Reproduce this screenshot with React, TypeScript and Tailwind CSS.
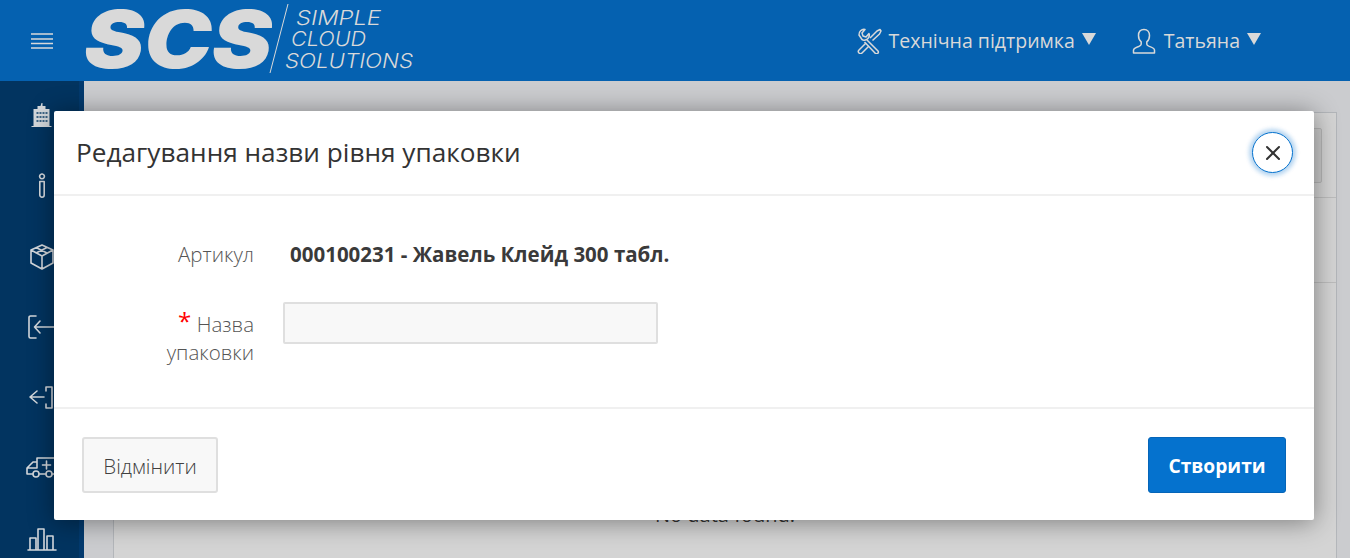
import { X } from "lucide-react"

function Logo() {
  return (
    <svg width="340" height="81" viewBox="0 0 340 81" className="shrink-0 overflow-visible" fill="#d9d9d9">
      <text
        x="0"
        y="68"
        fontFamily="Inter, sans-serif"
        fontWeight="900"
        fontStyle="italic"
        fontSize="80"
        textLength="188"
        lengthAdjust="spacingAndGlyphs"
      >
        SCS
      </text>
      <path d="M204 4 L186 73" stroke="#d9d9d9" strokeWidth="1" />
      <g fontFamily="Inter, sans-serif" fontStyle="italic" fontWeight="300" fontSize="20">
        <text x="212" y="25" textLength="85" lengthAdjust="spacingAndGlyphs">SIMPLE</text>
        <text x="207" y="46" textLength="75" lengthAdjust="spacingAndGlyphs">CLOUD</text>
        <text x="201" y="68" textLength="128" lengthAdjust="spacingAndGlyphs">SOLUTIONS</text>
      </g>
    </svg>
  )
}

function Caret() {
  return (
    <svg width="14" height="12" viewBox="0 0 14 12" fill="#d9d9d9" className="mb-[4px]">
      <path d="M0 0 H14 L7 12 Z" />
    </svg>
  )
}

const iconProps = {
  fill: "none",
  stroke: "#d4d8dc",
  strokeWidth: 1.6,
  strokeLinejoin: "round" as const,
  strokeLinecap: "round" as const,
}

function SideIcon({ d, w = 30, h = 30 }: { d: string; w?: number; h?: number }) {
  return (
    <svg width={w} height={h} viewBox="0 0 30 30" {...iconProps} className="overflow-visible">
      <path d={d} />
    </svg>
  )
}

function BuildingIcon() {
  return (
    <svg width="30" height="30" viewBox="0 0 30 30">
      <path
        fill="#d4d8dc"
        d="M14.5 2 h1 v3 h3 v3 h4 v17 h2 v1 h-20 v-1 h2 v-17 h4 v-3 h3 z"
      />
      <g fill="#3d6485">
        <rect x="9.5" y="11" width="2" height="2" />
        <rect x="12.5" y="11" width="2" height="2" />
        <rect x="15.5" y="11" width="2" height="2" />
        <rect x="18.5" y="11" width="2" height="2" />
        <rect x="9.5" y="15" width="2" height="2" />
        <rect x="12.5" y="15" width="2" height="2" />
        <rect x="15.5" y="15" width="2" height="2" />
        <rect x="18.5" y="15" width="2" height="2" />
        <rect x="9.5" y="19" width="2" height="2" />
        <rect x="12.5" y="19" width="2" height="2" />
        <rect x="15.5" y="19" width="2" height="2" />
        <rect x="18.5" y="19" width="2" height="2" />
      </g>
    </svg>
  )
}

const sideIcons = [
  <BuildingIcon key="building" />,
  <SideIcon key="info" d="M15 3 a2.4 2.4 0 1 0 .01 0 M12.8 10.5 h4.4 v13.5 a2.2 2.2 0 0 1 -4.4 0 z" />,
  <SideIcon key="box" d="M15 3 L26 8 V21 L15 27 L4 21 V8 Z M4 8 L15 14 L26 8 M15 14 V27 M9 5.5 L20 11 M20 5.5 L9 11" />,
  <SideIcon key="in" d="M9 4 H3.5 A1.5 1.5 0 0 0 2 5.5 V24.5 A1.5 1.5 0 0 0 3.5 26 H9 M13 9 L7.5 15 L13 21 M7.5 15 H30" />,
  <SideIcon key="out" d="M19 5 H25 M19 26 H25 M19 5 V9 M19 26 V22 M10 9 L3 15 L10 21 M3 15 H17 M25 5 V26" />,
  <SideIcon key="amb" d="M0 22 V16 L6 10 H10 V6 H28 V22 H25 M19 22 H12 M6 22 H0 M1 16 H10 V10 M19.5 9 V17 M15.5 13 H23.5 M6 22 a3 3 0 1 0 6 0 a3 3 0 1 0 -6 0 M19 22 a3 3 0 1 0 6 0 a3 3 0 1 0 -6 0" />,
  <SideIcon key="chart" d="M1 27 H29 M3 27 V15 H9 V27 M11 27 V6 H17 V27 M20 27 V13 H26 V27" />,
]

export default function App() {
  return (
    <div className="relative flex h-[558px] flex-col overflow-hidden bg-[#f4f6f9] font-['Open_Sans',sans-serif] text-[#333]">
      <header className="z-10 flex h-[81px] shrink-0 items-center bg-[#0561b0]">
        <div className="flex w-[84px] shrink-0 justify-center">
          <svg width="22" height="18" viewBox="0 0 22 18" stroke="#d9d9d9" strokeWidth="1.5">
            <path d="M0 2 H22 M0 7 H22 M0 11.5 H22 M0 16 H22" />
          </svg>
        </div>
        <Logo />
        <nav className="ml-auto flex items-center gap-[35px] pr-[89px] text-[19.5px] text-[#d9d9d9]">
          <div className="flex items-center gap-[7px]">
            <svg width="26" height="26" viewBox="0 0 26 26" fill="none" stroke="#d9d9d9" strokeWidth="1.5" strokeLinejoin="round">
              <path d="M3 7 a5 5 0 0 1 6 -5.5 L6 5 L7 8 L10 9 L13 5.5 a5 5 0 0 1 -6 6.5 L6 11.5 Z" />
              <path d="M11 12 L22 23 a1.8 1.8 0 0 1 -3 2 L8.5 14" />
              <path d="M14 10 L21 3 L24 1.5 L25 3 L23.5 6 L16.5 12.5" />
              <path d="M10 15 L3 22 a1.8 1.8 0 0 0 3 3 L13 18" />
            </svg>
            <span>Технічна підтримка</span>
            <Caret />
          </div>
          <div className="flex items-center gap-[7px]">
            <svg width="26" height="26" viewBox="0 0 26 26" fill="none" stroke="#d9d9d9" strokeWidth="1.5" strokeLinejoin="round">
              <path d="M13 1.5 c-3.6 0 -5.5 2.6 -5.5 6 c0 2.8 1 5 2.7 6.4 v2.4 c0 1 -1 1.6 -2.5 2.2 c-3 1.1 -5 2 -5.2 3.6 V25 h21 v-3 c-.2 -1.6 -2.2 -2.5 -5.2 -3.6 c-1.5 -.6 -2.5 -1.2 -2.5 -2.2 v-2.4 c1.7 -1.4 2.7 -3.6 2.7 -6.4 c0 -3.4 -1.9 -6 -5.5 -6 z" />
            </svg>
            <span>Татьяна</span>
            <Caret />
          </div>
        </nav>
      </header>

      <div className="flex min-h-0 flex-1">
        <aside className="z-10 flex w-[84px] shrink-0 flex-col items-center gap-[40.3px] border-r-[5px] border-[#033a6e] bg-[#023460] pt-[20px] pl-[5px]">
          {sideIcons}
        </aside>
        <main className="relative flex-1 pt-[31px] pr-[13px] pl-[29px]">
          <div className="flex h-[600px] flex-col border border-[#d8dbe0] bg-white">
            <div className="flex h-[85px] items-start justify-end border-b border-[#e4e4e4] pt-[15px] pr-[14px]">
              <div className="h-[55px] w-[70px] rounded-[2px] border border-[#dcdcdc] bg-[#f5f5f5]" />
            </div>
            <div className="h-[85px] border-b border-[#e4e4e4]" />
            <p className="pt-[217px] text-center text-[20px] text-[#404040]">No data found.</p>
          </div>
          <div className="absolute inset-0 bg-black/[.17]" />
        </main>
      </div>

      <div className="absolute top-[111px] left-[54px] z-20 flex h-[409px] w-[1260px] flex-col rounded-[2px] bg-white shadow-[0_2px_26px_rgba(0,0,0,0.42)]">
        <div className="flex h-[85px] shrink-0 items-center justify-between border-b-2 border-[#f0f0f0] pr-[21px] pl-[22px]">
          <h1 className="text-[26.2px] text-[#333]">Редагування назви рівня упаковки</h1>
          <button className="flex h-[41px] w-[41px] items-center justify-center rounded-full border-[1.5px] border-[#0572ce] bg-white shadow-[0_0_4px_3px_rgba(5,114,206,0.3)]">
            <X size={24} strokeWidth={2} color="#333" />
          </button>
        </div>

        <div className="flex-1 pt-[43px]">
          <div className="flex items-center text-[20.5px]">
            <label className="w-[200px] text-right font-light text-[#555]">Артикул</label>
            <span className="ml-[36px] font-bold text-[#3a3a3a]">000100231 - Жавель Клейд 300 табл.</span>
          </div>
          <div className="mt-[32px] flex items-start">
            <label className="w-[200px] pt-[8px] pl-[100px] text-right text-[20.5px] leading-[28px] font-light text-[#555]">
              <span className="relative top-[-2px] inline-block text-[24px] leading-[20px] font-normal text-[#f00]">*</span> Назва упаковки
            </label>
            <input className="ml-[29px] h-[42px] w-[375px] rounded-[2px] border-2 border-[#dfdfdf] bg-[#f8f8f8]" />
          </div>
        </div>

        <div className="flex h-[113px] shrink-0 items-start justify-between border-t-2 border-[#f0f0f0] pt-[28px] pr-[28px] pl-[28px]">
          <button className="h-[56px] w-[136px] rounded-[3px] border-2 border-[#dfdfdf] bg-[#f8f8f8] pt-[2px] text-[20.5px] font-light text-[#404040]">
            Відмінити
          </button>
          <button className="h-[56px] w-[138px] rounded-[3px] border border-[#0565b8] bg-[#0572ce] pt-[2px] text-[19.2px] font-bold text-white">
            Створити
          </button>
        </div>
      </div>
    </div>
  )
}
